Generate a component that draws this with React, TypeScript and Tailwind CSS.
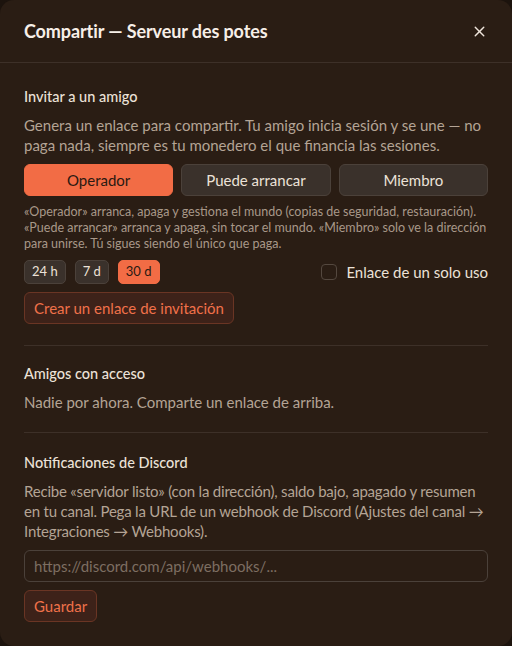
import React, { useState } from "react";
import { X } from "lucide-react";

const ROLES = ["Operador", "Puede arrancar", "Miembro"] as const;
const DURATIONS = ["24 h", "7 d", "30 d"] as const;

const SectionTitle: React.FC<{ children: React.ReactNode }> = ({ children }) => (
  <h3 className="text-[14.5px] font-medium leading-5 text-[#ece2d8]">{children}</h3>
);

export default function App() {
  const [role, setRole] = useState<(typeof ROLES)[number]>("Operador");
  const [duration, setDuration] = useState<(typeof DURATIONS)[number]>("30 d");
  const [singleUse, setSingleUse] = useState(false);

  return (
    <div
      className="min-h-[646px] bg-[#1c130d] text-[#ece2d8]"
      style={{ fontFamily: "Lato, 'Liberation Sans', sans-serif" }}
    >
      <div className="min-h-[646px] rounded-[14px] bg-[#2a1d14] flex flex-col">
        {/* Header */}
        <div className="flex items-center justify-between h-[63px] px-6 border-b border-[#3d3028]">
          <h2 className="text-[18px] font-bold tracking-[-0.1px] text-[#f7efe8]">
            Compartir — Serveur des potes
          </h2>
          <button className="text-[#efe5dc]">
            <X size={17} strokeWidth={2} />
          </button>
        </div>

        <div className="px-6 pt-[24px] flex flex-col">
          {/* Invite */}
          <SectionTitle>Invitar a un amigo</SectionTitle>
          <p className="mt-[8px] text-[15px] leading-5 text-[#b4a495]">
            Genera un enlace para compartir. Tu amigo inicia sesión y se une — no paga nada,
            siempre es tu monedero el que financia las sesiones.
          </p>

          <div className="mt-[9px] grid grid-cols-3 gap-2">
            {ROLES.map((r) => (
              <button
                key={r}
                onClick={() => setRole(r)}
                className={
                  r === role
                    ? "h-8 rounded-md bg-[#f26c45] border border-[#f26c45] text-[15px] text-[#2a1a12]"
                    : "h-8 rounded-md bg-[#3a312b] border border-[#4b413a] text-[15px] text-[#ece2d8]"
                }
              >
                {r}
              </button>
            ))}
          </div>

          <p className="mt-[8px] text-[12.5px] leading-4 text-[#a89889]">
            «Operador» arranca, apaga y gestiona el mundo (copias de seguridad, restauración).
            «Puede arrancar» arranca y apaga, sin tocar el mundo. «Miembro» solo ve la dirección
            para unirse. Tú sigues siendo el único que paga.
          </p>

          <div className="mt-[8px] flex items-center justify-between">
            <div className="flex gap-[9px]">
              {DURATIONS.map((d) => (
                <button
                  key={d}
                  onClick={() => setDuration(d)}
                  className={
                    d === duration
                      ? "h-6 px-[7px] rounded-[5px] bg-[#f26c45] border border-[#f26c45] text-[13px] text-[#2a1a12]"
                      : "h-6 px-[7px] rounded-[5px] bg-[#3a312b] border border-[#4b413a] text-[13px] text-[#ece2d8]"
                  }
                >
                  {d}
                </button>
              ))}
            </div>
            <label className="flex items-center gap-[9px] text-[15px] text-[#ece2d8] cursor-pointer">
              <input
                type="checkbox"
                checked={singleUse}
                onChange={(e) => setSingleUse(e.target.checked)}
                className="appearance-none w-4 h-4 rounded-[4px] border border-[#54483f] bg-[#2a1d14]"
              />
              Enlace de un solo uso
            </label>
          </div>

          <div className="mt-[8px]">
            <button className="h-8 px-[9px] rounded-md bg-[#3d2219] border border-[#6a3524] text-[15px] text-[#f0714a]">
              Crear un enlace de invitación
            </button>
          </div>

          <div className="mt-[21px] border-t border-[#3d3028]" />

          {/* Friends */}
          <div className="pt-[18px] pb-[20px]">
            <SectionTitle>Amigos con acceso</SectionTitle>
            <p className="mt-[8px] text-[15px] leading-5 text-[#b4a495]">
              Nadie por ahora. Comparte un enlace de arriba.
            </p>
          </div>

          <div className="border-t border-[#3d3028]" />

          {/* Discord */}
          <div className="pt-[20px]">
            <SectionTitle>Notificaciones de Discord</SectionTitle>
            <p className="mt-[8px] text-[15px] leading-5 tracking-[-0.2px] text-[#b4a495]">
              Recibe «servidor listo» (con la dirección), saldo bajo, apagado y resumen en tu
              canal. Pega la URL de un webhook de Discord (Ajustes del canal → Integraciones →
              Webhooks).
            </p>
            <input
              type="text"
              placeholder="https://discord.com/api/webhooks/..."
              className="mt-[9px] w-full h-8 px-[9px] rounded-md bg-[#2a1d14] border border-[#4b413a] text-[15px] text-[#ece2d8] placeholder:text-[#7d6e62] outline-none"
            />
            <button className="mt-2 h-8 px-[9px] rounded-md bg-[#3d2219] border border-[#6a3524] text-[15px] text-[#f0714a]">
              Guardar
            </button>
          </div>
        </div>
      </div>
    </div>
  );
}
